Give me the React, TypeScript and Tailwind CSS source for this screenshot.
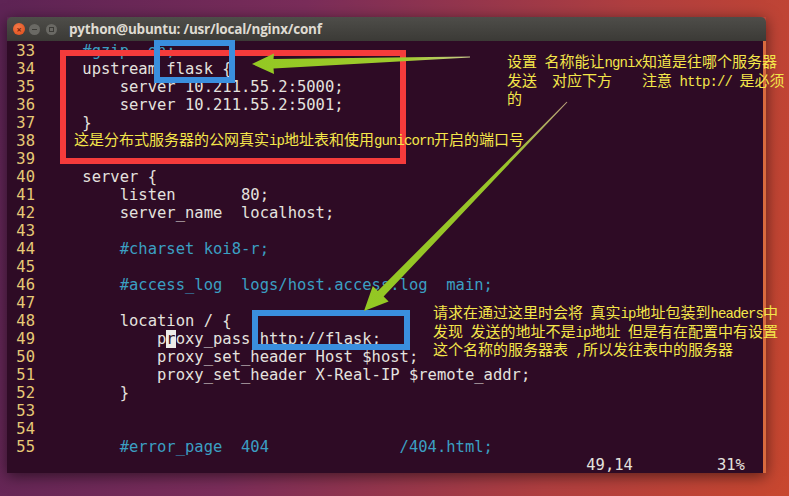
import React from "react"

type Line = { n: number; text: string; kind?: "code" | "comment" }

const lines: Line[] = [
  { n: 33, text: "    #gzip  on;", kind: "comment" },
  { n: 34, text: "    upstream flask {" },
  { n: 35, text: "        server 10.211.55.2:5000;" },
  { n: 36, text: "        server 10.211.55.2:5001;" },
  { n: 37, text: "    }" },
  { n: 38, text: "" },
  { n: 39, text: "" },
  { n: 40, text: "    server {" },
  { n: 41, text: "        listen       80;" },
  { n: 42, text: "        server_name  localhost;" },
  { n: 43, text: "" },
  { n: 44, text: "        #charset koi8-r;", kind: "comment" },
  { n: 45, text: "" },
  { n: 46, text: "        #access_log  logs/host.access.log  main;", kind: "comment" },
  { n: 47, text: "" },
  { n: 48, text: "        location / {" },
  { n: 49, text: "CURSOR" },
  { n: 50, text: "            proxy_set_header Host $host;" },
  { n: 51, text: "            proxy_set_header X-Real-IP $remote_addr;" },
  { n: 52, text: "        }" },
  { n: 53, text: "" },
  { n: 54, text: "" },
  { n: 55, text: "        #error_page  404              /404.html;", kind: "comment" },
]

// annotation text: latin runs are half width, like the original font
function Ann({ text }: { text: string }) {
  const parts = text.match(/[\x00-\x7f]+|[^\x00-\x7f]+/g) ?? []
  return (
    <div className="h-[18.5px] whitespace-pre leading-[18.5px]">
      {parts.map((p, i) =>
        /^[\x00-\x7f]+$/.test(p) ? (
          <span key={i} className="font-['Liberation_Mono',monospace] text-[14px] tracking-[-0.9px]">
            {p}
          </span>
        ) : (
          <span key={i}>{p}</span>
        )
      )}
    </div>
  )
}

export default function App() {
  return (
    <div className="relative h-[496px] w-[789px] overflow-hidden bg-[linear-gradient(100deg,#5e2455_0%,#7a2d5a_35%,#b03f40_72%,#c8472f_100%)] pl-[7px] pt-[17px]">
      {/* terminal window */}
      <div className="flex w-[759px] flex-col shadow-[0_3px_14px_rgba(0,0,0,0.55)]">
        {/* title bar */}
        <div className="flex h-[24px] items-center rounded-t-[5px] bg-[linear-gradient(#4e4d49,#3b3a36)] pl-[6px]">
          <div className="flex h-[12px] w-[12px] items-center justify-center rounded-full bg-[radial-gradient(circle_at_40%_35%,#f47a4a,#dd4814)]">
            <span className="text-[9px] leading-none font-bold text-[#7a2208]">×</span>
          </div>
          <div className="ml-[4px] flex h-[11px] w-[11px] items-center justify-center rounded-full bg-[#6a6964]">
            <span className="h-[1px] w-[5px] bg-[#3c3b37]" />
          </div>
          <div className="ml-[6px] flex h-[11px] w-[11px] items-center justify-center rounded-full bg-[#6a6964]">
            <span className="h-[5px] w-[5px] border border-[#3c3b37]" />
          </div>
          <span className="ml-[12px] font-['Open_Sans',sans-serif] text-[13.5px] font-bold tracking-[-0.2px] text-[#dfdbd2]">
            python@ubuntu: /usr/local/nginx/conf
          </span>
        </div>

        {/* terminal body */}
        <div className="h-[432px] border-r-[3px] border-[#d86a3e] bg-[#2e0b25] pt-[1px] font-['DejaVu_Sans_Mono',monospace] text-[15.5px] leading-[18px]">
          {lines.map((l) => (
            <div key={l.n} className="flex h-[18px]">
              <span className="w-[28px] text-right text-[#e6c976]">{l.n}</span>
              <pre
                className={`pl-[10px] font-['DejaVu_Sans_Mono',monospace] ${
                  l.kind === "comment" ? "text-[#3b9fc2]" : "text-[#e4e2df]"
                }`}
              >
                {l.text === "CURSOR" ? (
                  <>
                    {"            p"}
                    <span className="bg-[#ecebe8] text-[#2e0b25]">r</span>
                    {"oxy_pass http://flask;"}
                  </>
                ) : (
                  l.text
                )}
              </pre>
            </div>
          ))}
          <div className="flex h-[18px]">
            <span className="w-[28px]" />
            <pre className="pl-[10px] font-['DejaVu_Sans_Mono',monospace] text-[#e4e2df]">
              {"                                                          49,14         31%"}
            </pre>
          </div>
        </div>
      </div>

      {/* highlight boxes */}
      <div className="absolute left-[60px] top-[50px] h-[114px] w-[346px] border-[6px] border-[#f53b3b]" />
      <div className="absolute left-[154px] top-[40px] h-[43px] w-[81px] border-[6px] border-[#3a8fde]" />
      <div className="absolute left-[252px] top-[310px] h-[40px] w-[158px] border-[6px] border-[#3a8fde]" />

      {/* arrows */}
      <svg className="pointer-events-none absolute left-0 top-0" width="789" height="496">
        <defs>
          <linearGradient id="a1" x1="252" y1="0" x2="470" y2="0" gradientUnits="userSpaceOnUse">
            <stop offset="0" stopColor="#93c823" />
            <stop offset="0.7" stopColor="#9fcb2c" />
            <stop offset="1" stopColor="#c9c98a" />
          </linearGradient>
          <linearGradient id="a2" x1="364" y1="311" x2="567" y2="102" gradientUnits="userSpaceOnUse">
            <stop offset="0" stopColor="#93c823" />
            <stop offset="0.7" stopColor="#99c42a" />
            <stop offset="1" stopColor="#b9a07a" />
          </linearGradient>
        </defs>
        <polygon
          points="252,64 274,53.5 273.5,59 470,56.5 470,57.5 273.5,68.5 274,74"
          fill="url(#a1)"
        />
        <polygon
          points="364,311 372.8,286.1 377.8,291 566.6,101.7 567.4,102.3 383.6,296.6 388.6,301.5"
          fill="url(#a2)"
        />
      </svg>

      {/* annotations */}
      <div className="absolute left-[507px] top-[52px] font-['Noto_Sans_CJK_SC',sans-serif] text-[15px] text-[#f4e64a]">
        <Ann text="设置 名称能让ngnix知道是往哪个服务器" />
        <Ann text="发送  对应下方    注意 http:// 是必须" />
        <Ann text="的" />
      </div>
      <div className="absolute left-[74px] top-[130px] font-['Noto_Sans_CJK_SC',sans-serif] text-[15px] text-[#f4e64a]">
        <Ann text="这是分布式服务器的公网真实ip地址表和使用gunicorn开启的端口号" />
      </div>
      <div className="absolute left-[433px] top-[303px] font-['Noto_Sans_CJK_SC',sans-serif] text-[15px] text-[#f4e64a]">
        <Ann text="请求在通过这里时会将 真实ip地址包装到headers中" />
        <Ann text="发现 发送的地址不是ip地址 但是有在配置中有设置" />
        <Ann text="这个名称的服务器表 ,所以发往表中的服务器" />
      </div>
    </div>
  )
}
